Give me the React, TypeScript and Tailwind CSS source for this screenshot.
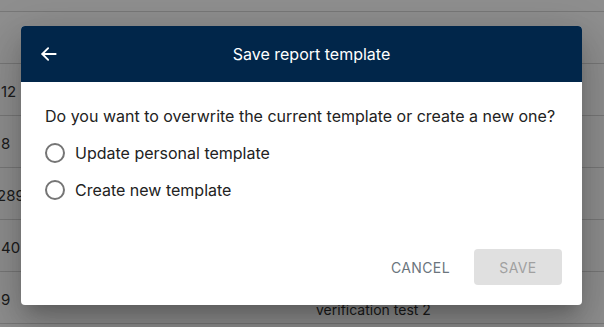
import React from "react";

const rows = [
  { a: "12", m: "ml-[1px]", b: "" },
  { a: "8", m: "ml-[1px]", b: "" },
  { a: "289", m: "ml-[-3px]", b: "" },
  { a: "40", m: "ml-[1px]", b: "" },
  { a: "9", m: "ml-[1px]", b: "verification test 2" },
];

function Radio() {
  return (
    <span className="w-[20px] h-[20px] rounded-full border-2 border-[#757575] box-border shrink-0" />
  );
}

export default function App() {
  return (
    <div
      className="relative w-[604px] h-[327px] overflow-hidden bg-white"
      style={{ fontFamily: "Inter, 'Noto Sans', sans-serif" }}
    >
      <div className="flex flex-col">
        <div className="h-[12px] border-b border-[#d6d6d6]" />
        <div className="h-[52px] border-b border-[#d6d6d6]" />
        {rows.map((r, i) => (
          <div key={i} className="relative h-[52px] border-b border-[#d6d6d6] flex items-center text-[15px] text-[#333]">
            <span className={r.m + " pt-[6px]"}>{r.a}</span>
            {r.b && <span className="absolute left-[316px] top-[27px] text-[14px]">{r.b}</span>}
          </div>
        ))}
      </div>
      <div className="absolute inset-0 bg-black/[0.44]" />
      <div className="absolute left-[21px] top-[26px] w-[561px] h-[279px] bg-white rounded-[4px] overflow-hidden flex flex-col shadow-[0_11px_15px_-7px_rgba(0,0,0,0.2),0_24px_38px_3px_rgba(0,0,0,0.14),0_9px_46px_8px_rgba(0,0,0,0.12)]">
        <div className="h-[56px] bg-[#01264a] flex items-center relative shrink-0">
          <svg className="absolute left-[18px]" width="20" height="20" viewBox="0 0 24 24" fill="none" stroke="white" strokeWidth="2.2" strokeLinecap="round" strokeLinejoin="round">
            <path d="M20 12H4" />
            <path d="M11 5l-7 7 7 7" />
          </svg>
          <div className="flex-1 pl-[20px] text-center text-white text-[16px]">Save report template</div>
        </div>
        <div className="flex flex-col px-[24px] pt-[24px] flex-1">
          <div className="text-[16px] text-[#222] leading-[20px]">
            Do you want to overwrite the current template or create a new one?
          </div>
          <div className="flex items-center gap-[10px] mt-[17px] text-[16px] leading-[20px] text-[#222]">
            <Radio />
            <span>Update personal template</span>
          </div>
          <div className="flex items-center gap-[10px] mt-[17px] text-[16px] leading-[20px] text-[#222]">
            <Radio />
            <span>Create new template</span>
          </div>
          <div className="flex-1" />
          <div className="flex justify-end items-center gap-[8px] pb-[20px] -mr-[4px]">
            <button className="h-[36px] px-[16px] text-[14px] tracking-[0.4px] text-[#6b757d]">CANCEL</button>
            <button className="h-[36px] w-[88px] rounded-[4px] bg-[#e0e0e0] text-[14px] tracking-[0.4px] text-[#a0a0a0]">SAVE</button>
          </div>
        </div>
      </div>
    </div>
  );
}
